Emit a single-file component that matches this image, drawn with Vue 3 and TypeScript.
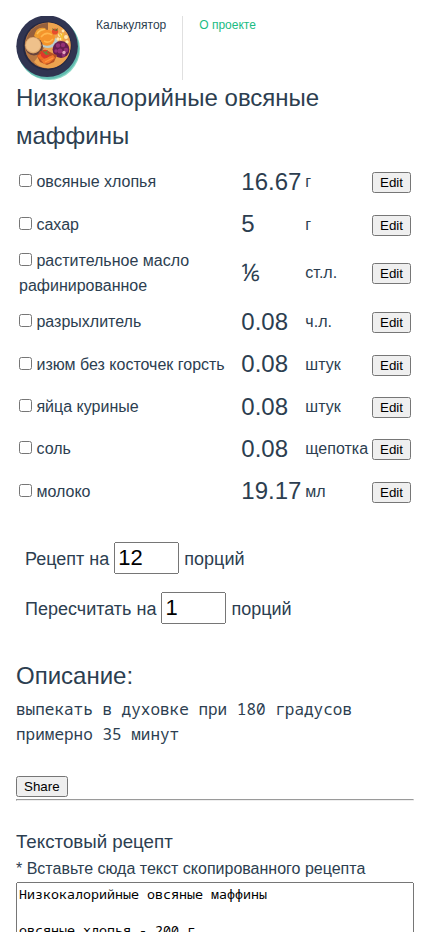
<script setup lang="ts">
import { ref } from 'vue'

interface Ingredient {
  name: string
  amount: string
  unit: string
}

const ingredients: Ingredient[] = [
  { name: 'овсяные хлопья', amount: '16.67', unit: 'г' },
  { name: 'сахар', amount: '5', unit: 'г' },
  { name: 'растительное масло рафинированное', amount: '⅙', unit: 'ст.л.' },
  { name: 'разрыхлитель', amount: '0.08', unit: 'ч.л.' },
  { name: 'изюм без косточек горсть', amount: '0.08', unit: 'штук' },
  { name: 'яйца куриные', amount: '0.08', unit: 'штук' },
  { name: 'соль', amount: '0.08', unit: 'щепотка' },
  { name: 'молоко', amount: '19.17', unit: 'мл' },
]

const portions = ref('12')
const target = ref('1')
const source = ref('Низкокалорийные овсяные маффины\n\nовсяные хлопья - 200 г')
</script>

<template>
  <div class="page">
    <header class="header">
      <svg class="logo" viewBox="0 0 64 64">
        <circle cx="33" cy="33" r="31" fill="#8bd8c6" />
        <circle cx="32.2" cy="32" r="31" fill="#62bbb0" />
        <circle cx="31.1" cy="30.2" r="30.8" fill="#303451" />
        <circle cx="31.2" cy="29.8" r="24.4" fill="#252842" />
        <circle cx="31.7" cy="29.6" r="23" fill="#b97843" />
        <path d="M32 6.6a23 23 0 0 1 8 44.4q-13 4-22-5L32 27Z" fill="#eda34f" />
        <path d="M13 17Q21 7 32 7v8L20 27 10 25Z" fill="#96603d" />
        <path d="M18 20q2-10 11-8l3 4-10 7Z" fill="#ef9e2f" />
        <path d="M21 18q3-5 8-4" fill="none" stroke="#ffc35d" stroke-width="1.5" />
        <ellipse cx="32" cy="26" rx="10" ry="6" fill="#b9ced0" />
        <circle cx="31" cy="21.8" r="8" fill="#f5942c" />
        <path d="M25 21q5-6 11-2m-8 6q5 3 9-2" fill="none" stroke="#ffb64d" stroke-width="1.5" />
        <circle cx="18" cy="30.5" r="8.9" fill="#67433b" />
        <circle cx="17.2" cy="29.3" r="8.2" fill="#deaa70" />
        <circle cx="17.2" cy="29" r="7.2" fill="#efc18b" />
        <circle cx="39" cy="15.5" r="3.1" fill="#e74c2d" />
        <path d="m36 12 3 2 3-2-1 3-4-1Z" fill="#64752f" />
        <g fill="#ffe8af">
          <circle cx="44" cy="19" r="2" /><circle cx="47" cy="15" r="1.4" />
          <circle cx="50" cy="21" r="2" /><circle cx="42" cy="23" r="1.7" />
          <circle cx="51" cy="26" r="1.7" /><circle cx="45" cy="23" r="1.4" />
        </g>
        <path d="m43 17 3 5m1-5-1 7" stroke="#f5bf32" stroke-width="1.7" />
        <circle cx="45" cy="33.5" r="8.4" fill="#651d50" />
        <g fill="#943075">
          <circle cx="42" cy="29.5" r="2.2" /><circle cx="47" cy="29" r="2.2" />
          <circle cx="50" cy="34" r="2.2" /><circle cx="44" cy="35" r="2.5" />
          <circle cx="40" cy="35" r="1.8" /><circle cx="47.5" cy="39" r="1.9" />
        </g>
        <circle cx="48" cy="36.5" r="1.7" fill="#e6a4bd" />
        <path d="M21 40 24 35 30 34 38 38 41 39 38 46 31 49 24 46Z" fill="#b95223" />
        <path d="M21 40 28 36 31 41 25 44Z" fill="#f16d24" />
        <path d="m25 44 12-5 2 3-6 5-5 1Z" fill="#f4792d" />
        <path d="m29 46 8-4" stroke="#ff9a41" stroke-width="1.2" />
        <circle cx="29" cy="38" r="4.3" fill="#df382c" />
        <path d="m26 34 3 2 3-2-1 3 3 1-4 1-2-2Z" fill="#668c37" />
      </svg>
      <nav class="nav">
        <a class="nav-link">Калькулятор</a>
        <a class="nav-link accent">О проекте</a>
      </nav>
    </header>

    <h1 class="title">Низкокалорийные овсяные маффины</h1>

    <table class="ingredients">
      <tbody>
        <tr v-for="item in ingredients" :key="item.name">
          <td><label><input type="checkbox" class="check" /> {{ item.name }}</label></td>
          <td class="amount">{{ item.amount }}</td>
          <td>{{ item.unit }}</td>
          <td><button>Edit</button></td>
        </tr>
      </tbody>
    </table>

    <section class="portions">
      <div class="portion-row">Рецепт на <input v-model="portions" class="portion-input" /> порций</div>
      <div class="portion-row">Пересчитать на <input v-model="target" class="portion-input" /> порций</div>
    </section>

    <h2 class="title">Описание:</h2>
    <pre class="description">выпекать в духовке при 180 градусов
примерно 35 минут</pre>
    <div class="share"><button>Share</button></div>
    <hr />

    <h3 class="subtitle">Текстовый рецепт</h3>
    <div class="hint">* Вставьте сюда текст скопированного рецепта</div>
    <textarea v-model="source" class="source"></textarea>
  </div>
</template>

<style>
body {
  background: #fff;
}
html {
  overflow: hidden;
}
</style>

<style scoped>
.page {
  box-sizing: border-box;
  height: 932px;
  overflow: hidden;
  padding: 16px 16px 0;
  color: #2c3e50;
  font: 16px/1.6 "Liberation Sans", Arial, sans-serif;
}
.header {
  display: flex;
  height: 64px;
}
.logo {
  width: 64px;
  height: 64px;
}
.nav {
  display: flex;
  font-size: 12px;
}
.nav-link {
  padding: 0 16px;
}
.nav-link + .nav-link {
  border-left: 1px solid #e0e0e0;
}
.accent {
  color: #1abc83;
}
.title {
  margin: -1px 0 0;
  font-size: 24px;
  font-weight: 400;
}
.ingredients {
  width: 398px;
  margin-top: 4px;
}
.amount {
  font-size: 24px;
}
.check {
  margin: 3px 0;
}
button {
  font: 13.333px "Liberation Sans", Arial, sans-serif;
}
.portions {
  padding: 19px 9px 25px;
  font-size: 18px;
}
.portion-row {
  box-sizing: border-box;
  height: 50px;
  padding-top: 9px;
  display: flex;
  align-items: baseline;
  gap: 5px;
}
.portion-input {
  box-sizing: border-box;
  width: 65px;
  height: 32px;
  font: 22px "Liberation Sans", Arial, sans-serif;
}
.description {
  margin: 1.6px 0 0;
  font: 16px/25px "Noto Sans Mono", monospace;
}
.share {
  display: flex;
  margin-top: 29.6px;
}
hr {
  margin: 2px 0 27px;
}
.subtitle {
  margin: 0;
  font-size: 18.72px;
  line-height: 28px;
  font-weight: 400;
}
.hint {
  font-size: 16px;
}
.source {
  display: block;
  box-sizing: border-box;
  width: 100%;
  height: 200px;
  font: 13.333px/18px "Noto Sans Mono", monospace;
}
</style>
